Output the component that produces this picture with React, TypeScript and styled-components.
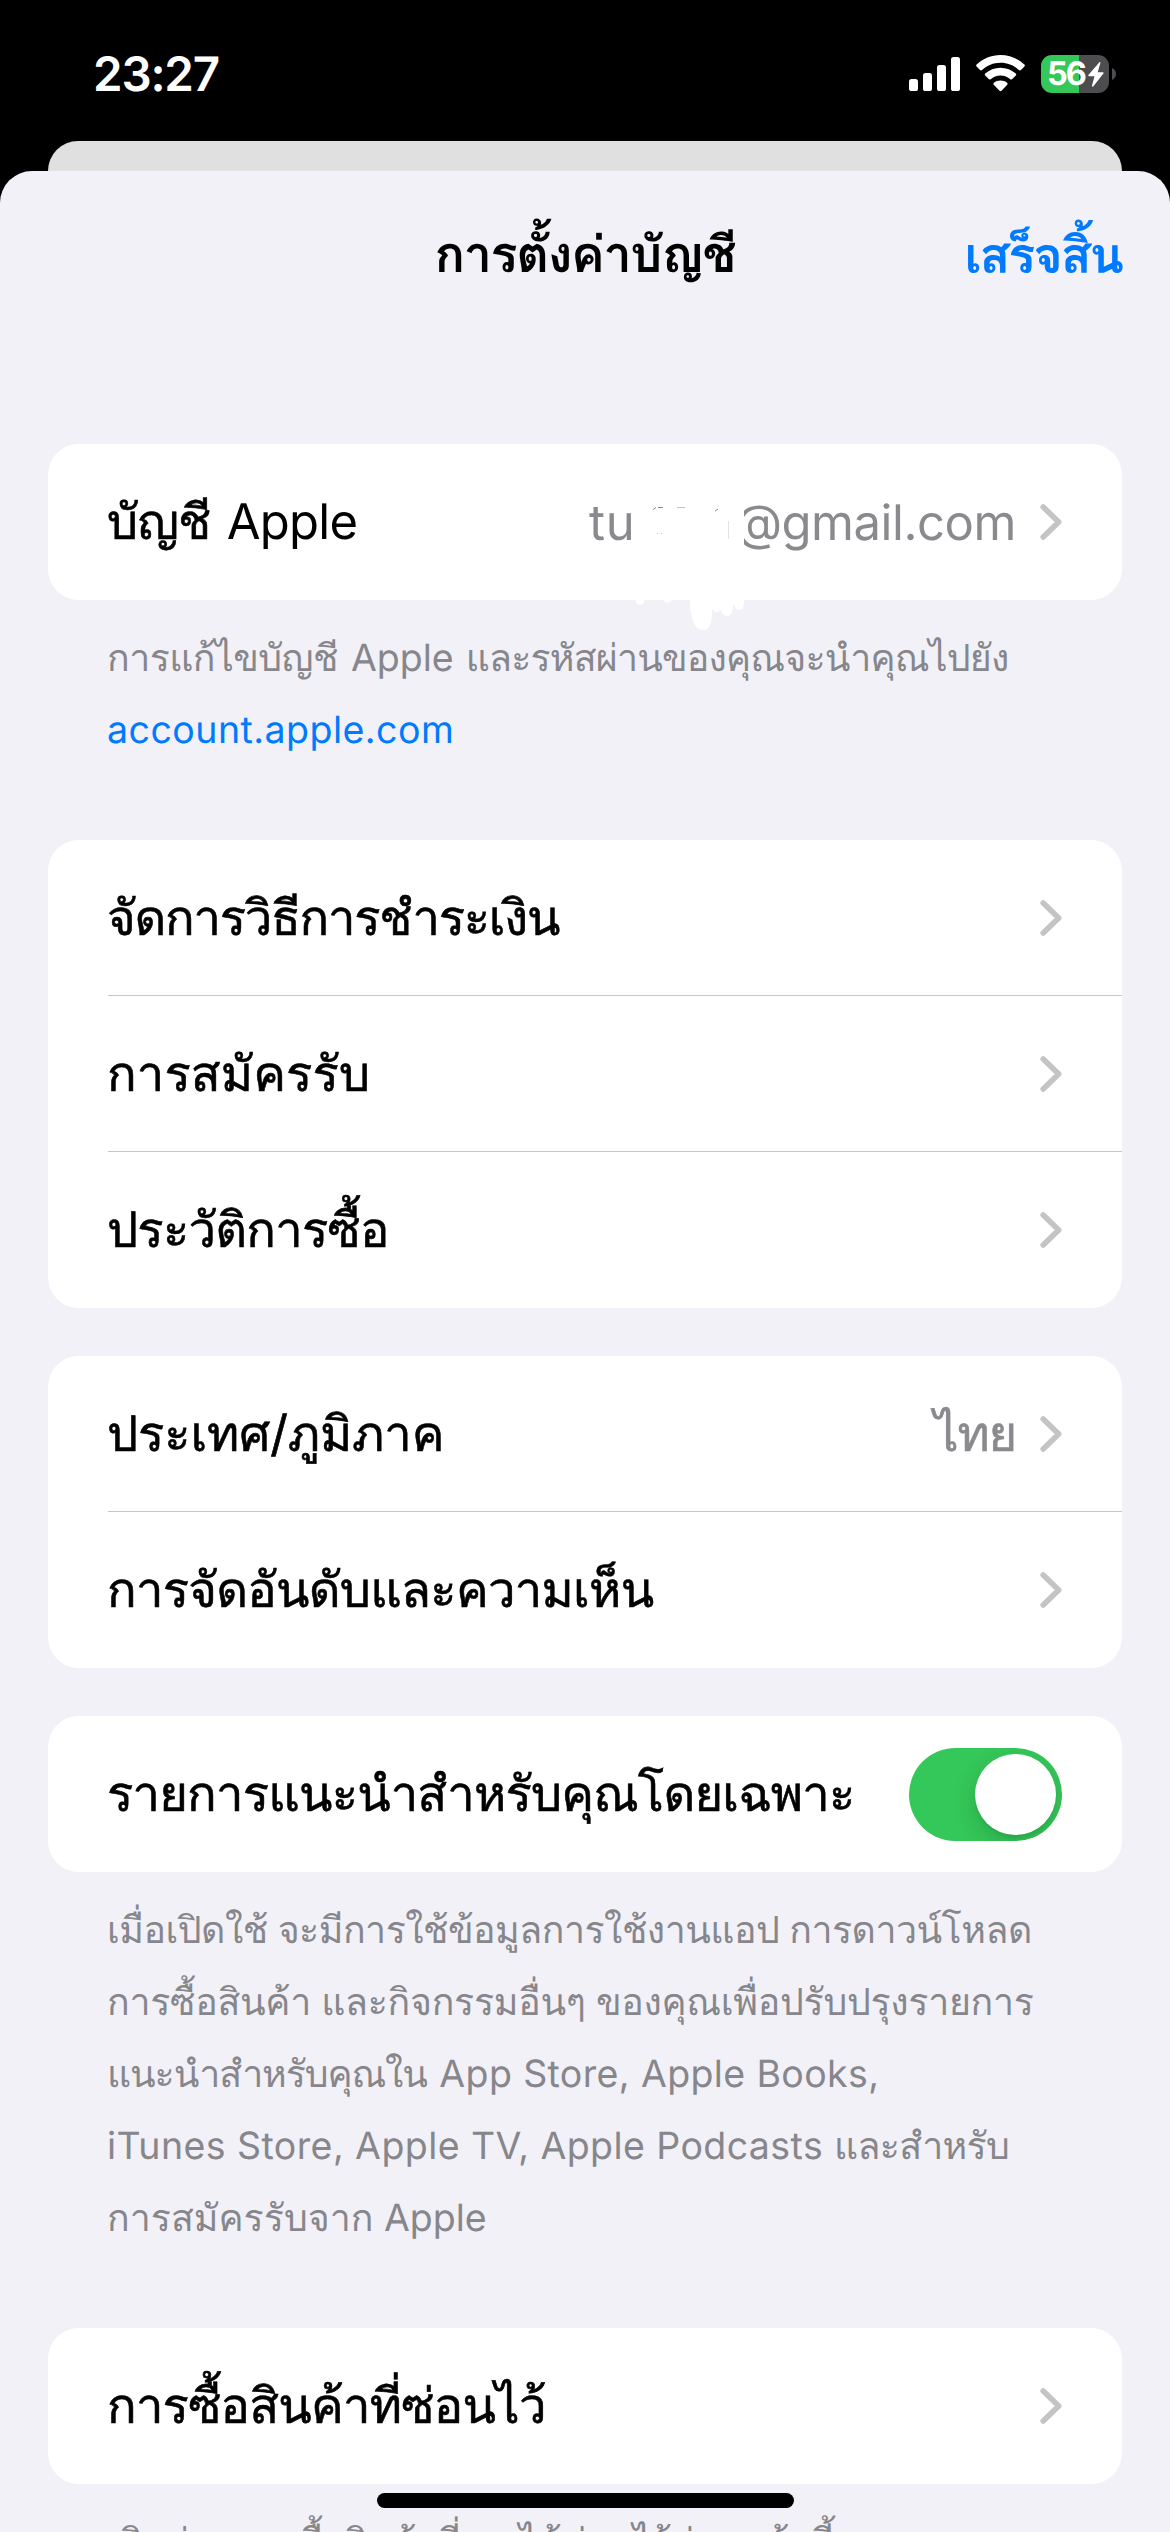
import React from "react";
import styled, { createGlobalStyle } from "styled-components";

const GlobalStyle = createGlobalStyle`
  * { box-sizing: border-box; }
  body {
    margin: 0;
    background: #000;
    font-family: Inter, Loma, "Noto Sans", sans-serif;
    text-rendering: geometricPrecision;
  }
`;

const Screen = styled.div`
  position: relative;
  display: flex;
  flex-direction: column;
  width: 1170px;
  height: 2532px;
  overflow: hidden;
  background: #000;
`;

const StatusBar = styled.header`
  display: flex;
  flex: none;
  align-items: center;
  justify-content: space-between;
  height: 141px;
  padding: 7px 54px 0 93px;
`;

const Clock = styled.time`
  color: #fff;
  font-size: 47.5px;
  font-weight: 600;
  letter-spacing: -1.2px;
`;

const StatusIcons = styled.div`
  display: flex;
  align-items: center;
  gap: 16px;
`;

const Battery = styled.div`
  display: flex;
  align-items: center;
  gap: 3px;
`;

const BatteryBody = styled.div<{ $level: number }>`
  display: flex;
  align-items: center;
  gap: 3px;
  width: 68px;
  height: 38px;
  padding-left: 6px;
  border-radius: 11px;
  background: linear-gradient(
    to right,
    #34c759 ${(p) => p.$level}%,
    #4d4d4f ${(p) => p.$level}%
  );
`;

const BatteryLevel = styled.span`
  color: #fff;
  font-size: 32.5px;
  font-weight: 700;
  line-height: 38px;
  letter-spacing: -2px;
`;

const SheetBehind = styled.div`
  flex: none;
  height: 70px;
  margin: 0 48px -40px;
  border-radius: 30px 30px 0 0;
  background: #e0e0e0;
`;

const Sheet = styled.main`
  flex: 1;
  min-height: 0;
  border-radius: 32px 32px 0 0;
  background: #f2f1f8;
  z-index: 1;
`;

const NavBar = styled.div`
  display: grid;
  grid-template-columns: 1fr auto 1fr;
  align-items: center;
  height: 168px;
  padding: 0 48px;
  font-size: 50.5px;
  font-weight: 600;
`;

const Title = styled.h1`
  grid-column: 2;
  margin: 0;
  font-size: inherit;
  font-weight: inherit;
  letter-spacing: -1.4px;
`;

const DoneButton = styled.button`
  justify-self: end;
  padding: 0;
  border: 0;
  background: none;
  color: #007aff;
  font: inherit;
  letter-spacing: -2.1px;
`;

const Content = styled.div`
  display: flex;
  flex-direction: column;
  gap: 48px;
  padding: 105px 48px 0;
`;

const Section = styled.section<{ $loose?: boolean }>`
  padding-bottom: ${(p) => (p.$loose ? 25 : 0)}px;
`;

const Card = styled.div`
  position: relative;
  border-radius: 31px;
  background: #fff;
`;

const Row = styled.div`
  display: flex;
  align-items: center;
  height: 156px;
  padding: 0 60px 0 59px;
  font-size: 49px;
  color: #000;

  &:not(:last-of-type) {
    background: linear-gradient(#c6c6c8, #c6c6c8) 60px 155px / 100% 1px no-repeat;
  }
`;

const Run = styled.span<{ $track?: number; $space?: number; $bolder?: boolean }>`
  letter-spacing: ${(p) => p.$track ?? 0}px;
  word-spacing: ${(p) => p.$space ?? 0}px;
  -webkit-text-stroke: ${(p) => (p.$bolder ? "0.6px currentColor" : "0")};
  white-space: pre;
`;

const Label = styled.div`
  flex: 1;
  white-space: pre;
`;

const Value = styled.div`
  display: flex;
  margin-right: 24px;
  color: #8a8a8e;
  white-space: pre;
`;

const HiddenPart = styled.span`
  width: 99px;
`;

const Smudge = styled.svg`
  position: absolute;
  top: 50px;
  left: 582px;
  width: 120px;
  height: 140px;
`;

const Footnote = styled.div`
  margin: 23px 0 0;
  padding: 0 59px;
  color: #86868b;
  font-size: 37.5px;
  line-height: 72px;
`;

const Line = styled.div`
  height: 72px;
  white-space: pre;
`;

const Link = styled.a`
  color: #007aff;
  letter-spacing: 0.47px;
  text-decoration: none;
`;

const Switch = styled.div`
  display: flex;
  justify-content: flex-end;
  width: 153px;
  height: 93px;
  padding: 6px;
  border-radius: 47px;
  overflow: hidden;
  background: #34c759;
`;

const Knob = styled.div`
  width: 81px;
  height: 81px;
  border-radius: 50%;
  background: #fff;
  box-shadow: 0 9px 24px rgba(0, 0, 0, 0.15), 0 3px 3px rgba(0, 0, 0, 0.06);
`;

const HomeIndicator = styled.div`
  position: absolute;
  bottom: 24px;
  left: 377px;
  width: 417px;
  height: 15px;
  border-radius: 8px;
  background: #000;
  z-index: 2;
`;

const Signal = () => (
  <svg width="51" height="38" viewBox="0 0 51 38" fill="#fff">
    <rect x="0" y="24" width="9" height="12" rx="2.6" />
    <rect x="14" y="18" width="9" height="18" rx="2.6" />
    <rect x="28" y="10" width="9" height="26" rx="2.6" />
    <rect x="42" y="2" width="9" height="34" rx="2.6" />
  </svg>
);

const Wifi = () => (
  <svg width="49" height="38" viewBox="0 0 49 38" fill="#fff">
    <path d="M24.5 0C15.3 0 6.9 3.6.6 9.5c-.6.5-.6 1.4 0 2L4 15c.5.6 1.4.6 2 .1 4.900-4.600 11.300-7.300 18.500-7.300s13.600 2.700 18.500 7.300c.6.5 1.500.5 2-.1l3.400-3.500c.6-.6.6-1.500 0-2C42.100 3.600 33.700 0 24.500 0z" />
    <path d="M24.500 12.700c-5.900 0-11.200 2.200-15.300 5.900-.6.5-.6 1.400 0 2l3.500 3.500c.5.6 1.400.6 2 .1 2.600-2.300 6-3.700 9.800-3.700s7.200 1.400 9.800 3.700c.6.5 1.500.5 2-.1l3.500-3.500c.6-.6.6-1.500 0-2-4.100-3.700-9.400-5.900-15.300-5.900z" />
    <path d="M24.500 25.500c-2.500 0-4.800.9-6.600 2.300-.6.5-.7 1.400-.1 2l5.700 5.900c.6.6 1.400.6 2 0l5.700-5.900c.6-.6.5-1.500-.1-2-1.800-1.400-4.100-2.300-6.600-2.300z" />
  </svg>
);

const Bolt = () => (
  <svg width="16" height="25" viewBox="0 0 16 25" fill="#fff">
    <path d="M11.2.4.6 12.800c-.6.7-.3 1.400.6 1.400h5.300L4 23.600c-.3 1.100.7 1.500 1.400.7L15.400 11.600c.6-.7.3-1.400-.6-1.400H9.700L12.400 1c.3-.9-.6-1.300-1.200-.6z" />
  </svg>
);

const BatteryTip = () => (
  <svg width="4" height="12" viewBox="0 0 4 12" fill="#4d4d4f">
    <path d="M0 0c2.400 1 4 3.300 4 6s-1.600 5-4 6z" />
  </svg>
);

const Chevron = () => (
  <svg width="22" height="36" viewBox="0 0 22 36" fill="none">
    <path
      d="M3.200 3 18.700 18 3.200 33"
      stroke="#c4c4c6"
      strokeWidth="5.600"
      strokeLinecap="round"
      strokeLinejoin="round"
    />
  </svg>
);

const AccountSmudge = () => (
  <Smudge viewBox="0 0 120 140" aria-hidden>
    <rect x="7" y="5" width="107" height="50" fill="#fff" />
    <path
      d="M5 103c0 5 2 8 5 8s4-3 5-5h18c1 2 3 3 4 3s3-1 5-3h18c0 14 3 30 13 30 8 0 9-9 9-21 3 4 6 4 9 1 1 4 4 6 6 6 5 0 6-5 6-12 2 4 4 6 6 6 4 0 5-3 5-8v-8H5z"
      fill="#fff"
    />
    <g fill="none" stroke="#8a8a8e" strokeWidth="1">
      <path d="M23 15.500 26 13.500M28 13.500h5" />
      <path d="M47 13.500h8M27 39.500h1M31 39.500h1" opacity=".5" />
      <path d="M85 17l3-2" />
      <path d="M98.500 27v18" opacity=".25" />
    </g>
  </Smudge>
);

interface Item {
  label: string;
  track: number;
  value?: string;
}

const purchases: Item[] = [
  { label: "จัดการวิธีการชำระเงิน", track: -1.27 },
  { label: "การสมัครรับ", track: 0.1 },
  { label: "ประวัติการซื้อ", track: -0.76 },
];

const region: Item[] = [
  { label: "ประเทศ/ภูมิภาค", track: -0.12, value: "ไทย" },
  { label: "การจัดอันดับและความเห็น", track: -0.74 },
];

const hidden: Item[] = [{ label: "การซื้อสินค้าที่ซ่อนไว้", track: -0.79 }];

const ItemCard = ({ items }: { items: Item[] }) => (
  <Card>
    {items.map((item) => (
      <Row key={item.label}>
        <Label>
          <Run $bolder $track={item.track}>
            {item.label}
          </Run>
        </Label>
        {item.value && (
          <Value>
            <Run $bolder $track={-1.2}>
              {item.value}
            </Run>
          </Value>
        )}
        <Chevron />
      </Row>
    ))}
  </Card>
);

export default function App() {
  return (
    <Screen>
      <GlobalStyle />
      <StatusBar>
        <Clock>23:27</Clock>
        <StatusIcons>
          <Signal />
          <Wifi />
          <Battery>
            <BatteryBody $level={56}>
              <BatteryLevel>56</BatteryLevel>
              <Bolt />
            </BatteryBody>
            <BatteryTip />
          </Battery>
        </StatusIcons>
      </StatusBar>

      <SheetBehind />
      <Sheet>
        <NavBar>
          <Title>การตั้งค่าบัญชี</Title>
          <DoneButton>เสร็จสิ้น</DoneButton>
        </NavBar>

        <Content>
          <Section $loose>
            <Card>
              <Row>
                <Label>
                  <Run $bolder $track={-0.9} $space={3.5}>
                    {"บัญชี "}
                  </Run>
                  <Run $track={-0.75}>Apple</Run>
                </Label>
                <Value>
                  <Run $track={0.8}>tu</Run>
                  <HiddenPart />
                  <Run $track={-0.46}>@gmail.com</Run>
                </Value>
                <Chevron />
              </Row>
              <AccountSmudge />
            </Card>
            <Footnote>
              <Line>
                <Run $track={-0.56} $space={3}>
                  {"การแก้ไขบัญชี "}
                </Run>
                <Run $space={1.5}>{"Apple "}</Run>
                <Run $track={-0.82}>และรหัสผ่านของคุณจะนำคุณไปยัง</Run>
              </Line>
              <Line>
                <Link>account.apple.com</Link>
              </Line>
            </Footnote>
          </Section>

          <ItemCard items={purchases} />
          <ItemCard items={region} />

          <Section $loose>
            <Card>
              <Row>
                <Label>
                  <Run $bolder $track={-0.81}>
                    รายการแนะนำสำหรับคุณโดยเฉพาะ
                  </Run>
                </Label>
                <Switch role="switch" aria-checked>
                  <Knob />
                </Switch>
              </Row>
            </Card>
            <Footnote>
              <Line>
                <Run $track={-0.52}>
                  เมื่อเปิดใช้ จะมีการใช้ข้อมูลการใช้งานแอป การดาวน์โหลด
                </Run>
              </Line>
              <Line>
                <Run $track={-0.29}>
                  การซื้อสินค้า และกิจกรรมอื่นๆ ของคุณเพื่อปรับปรุงรายการ
                </Run>
              </Line>
              <Line>
                <Run $track={-1.1} $space={3}>
                  {"แนะนำสำหรับคุณใน "}
                </Run>
                <Run $track={0.37}>App Store, Apple Books,</Run>
              </Line>
              <Line>
                <Run $track={0.42}>{"iTunes Store, Apple TV, Apple Podcasts "}</Run>
                <Run $track={-0.7}>และสำหรับ</Run>
              </Line>
              <Line>
                <Run>การสมัครรับจาก Apple</Run>
              </Line>
            </Footnote>
          </Section>

          <Section>
            <ItemCard items={hidden} />
            <Footnote>
              <Line>
                <Run $track={-0.62}>
                  เลิกซ่อนการซื้อสินค้าที่คุณได้ซ่อนไว้ก่อนหน้านี้
                </Run>
              </Line>
            </Footnote>
          </Section>
        </Content>
      </Sheet>
      <HomeIndicator />
    </Screen>
  );
}
